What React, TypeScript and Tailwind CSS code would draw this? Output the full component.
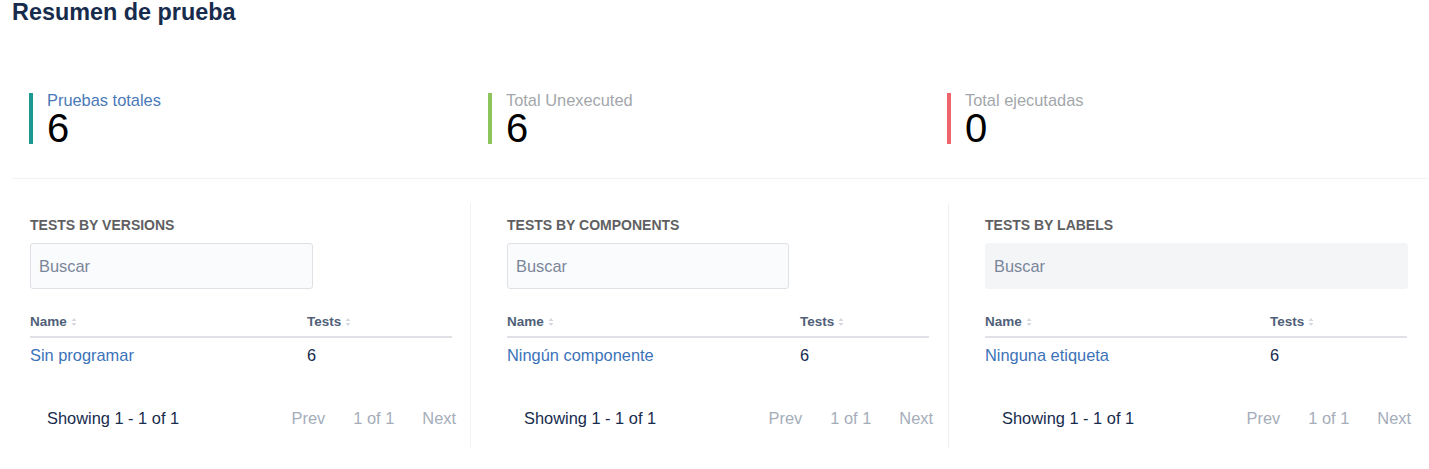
const stats = [
  { label: "Pruebas totales", value: "6", bar: "bg-[#1c9792]", text: "text-[#4a79b8]" },
  { label: "Total Unexecuted", value: "6", bar: "bg-[#8cc65a]", text: "text-[#a3a7ab]" },
  { label: "Total ejecutadas", value: "0", bar: "bg-[#ee646c]", text: "text-[#a3a7ab]" },
];

const panels = [
  {
    title: "Tests by versions",
    name: "Sin programar",
    col: "w-[277px]",
    search: "w-[283px] bg-[#fafbfc] border border-[#dfe1e6]",
    box: "w-[458px] pl-[18px]",
  },
  {
    title: "Tests by components",
    name: "Ningún componente",
    col: "w-[293px]",
    search: "w-[282px] bg-[#fafbfc] border border-[#dfe1e6]",
    box: "w-[478px] pl-[36px] border-l border-[#f0f1f3]",
  },
  {
    title: "Tests by labels",
    name: "Ninguna etiqueta",
    col: "w-[285px]",
    search: "w-[423px] bg-[#f4f5f7] border border-[#f4f5f7]",
    box: "flex-1 pl-[36px] border-l border-[#f0f1f3]",
  },
];

function SortIcon() {
  return (
    <svg width="6" height="10" viewBox="0 0 6 10" className="ml-[4px] inline-block">
      <path d="M3 1 L5.5 4 L0.5 4 Z" fill="#d5d9df" />
      <path d="M3 9 L5.5 6 L0.5 6 Z" fill="#d5d9df" />
    </svg>
  );
}

function Panel({ p }: { p: (typeof panels)[number] }) {
  return (
    <div className={`${p.box} pt-[12px] pb-[20px]`}>
      <div className="w-[422px]">
        <div className="text-[14px] leading-[20px] font-bold uppercase text-[#5f5f62]">
          {p.title}
        </div>
        <div
          className={`${p.search} mt-[8px] h-[46px] rounded-[3px] flex items-center pl-[8px] text-[16.4px] text-[#7a869a]`}
        >
          Buscar
        </div>
        <div className="mt-[23px] flex border-b-2 border-[#dfe1e6] pb-[4px] text-[13.5px] leading-[20px] font-bold text-[#505f79]">
          <div className={`${p.col} flex items-center`}>
            Name
            <SortIcon />
          </div>
          <div className="flex items-center">
            Tests
            <SortIcon />
          </div>
        </div>
        <div className="flex pt-[7px] text-[16.4px] leading-[20px]">
          <div className={`${p.col} text-[#3b73b9]`}>{p.name}</div>
          <div className="text-[#172b4d]">6</div>
        </div>
        <div className="mt-[43px] -mr-[4px] pl-[17px] flex justify-between text-[16.4px] leading-[20px]">
          <span className="text-[#172b4d]">Showing 1 - 1 of 1</span>
          <div className="flex gap-[28px] text-[#a5adba]">
            <span>Prev</span>
            <span>1 of 1</span>
            <span>Next</span>
          </div>
        </div>
      </div>
    </div>
  );
}

export default function App() {
  return (
    <div className="w-[1429px] h-[469px] bg-white pl-[12px] font-['Liberation_Sans',Arial,sans-serif]">
      <h1 className="text-[23.4px] leading-[24px] font-bold text-[#172b4d]">Resumen de prueba</h1>
      <div className="pt-[69px] pl-[17px] flex">
        {stats.map((s) => (
          <div key={s.label} className="w-[459px] flex">
            <div className={`${s.bar} w-[4px] h-[51px]`} />
            <div className="ml-[14px]">
              <div className={`${s.text} text-[16.4px] leading-[14px]`}>{s.label}</div>
              <div className="text-[40px] leading-[43px] text-black">{s.value}</div>
            </div>
          </div>
        ))}
      </div>
      <div className="mt-[28px] border-t border-[#f2f3f5]" />
      <div className="mt-[24px] flex">
        {panels.map((p) => (
          <Panel key={p.title} p={p} />
        ))}
      </div>
    </div>
  );
}
